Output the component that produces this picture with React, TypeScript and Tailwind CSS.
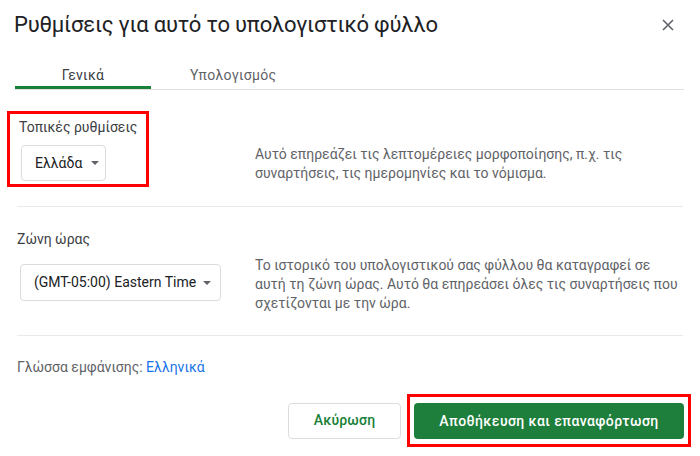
import React from "react";

function Caret() {
  return (
    <svg width="8" height="4" viewBox="0 0 8 4" className="shrink-0">
      <path d="M0 0 L8 0 L4 4 Z" fill="#5f6368" />
    </svg>
  );
}

export default function App() {
  return (
    <div
      className="w-[700px] h-[456px] bg-white overflow-hidden"
      style={{ fontFamily: "Roboto, 'Noto Sans', sans-serif" }}
    >
      {/* Header */}
      <div className="h-[50px] flex items-center justify-between pl-[14px] pr-[26px]">
        <div className="text-[22px] text-[#202124] leading-none tracking-[-0.2px]">
          Ρυθμίσεις για αυτό το υπολογιστικό φύλλο
        </div>
        <svg width="12" height="12" viewBox="0 0 12 12">
          <path d="M1 1 L11 11 M11 1 L1 11" stroke="#5f6368" strokeWidth="1.6" />
        </svg>
      </div>

      {/* Tabs */}
      <div className="mt-[10px] ml-[15px] mr-[16px] flex border-b border-[#e0e0e0]">
        <div className="w-[136px] h-[29px] flex items-center justify-center border-b-[3px] border-[#188038] -mb-[1px] pt-[4px] text-[14px] tracking-[0.3px] text-[#3c4043]">
          Γενικά
        </div>
        <div className="h-[29px] flex items-center pl-[39px] pt-[1px] text-[14px] tracking-[0.3px] text-[#5f6368]">
          Υπολογισμός
        </div>
      </div>

      {/* Content */}
      <div className="px-[17px]">
        {/* Section 1 */}
        <div className="mt-[21px] flex items-start">
          <div className="w-[238px] shrink-0">
            <div className="-ml-[10px] w-[142px] border-[3px] border-[#ff0000] pl-[9px] pt-[3px] pb-[3px]">
              <div className="text-[14px] leading-[20px] text-[#3c4043]">Τοπικές ρυθμίσεις</div>
              <div className="mt-[8px] ml-[2px] w-[85px] h-[36px] border border-[#dadce0] rounded-[4px] flex items-center pl-[13px] gap-[9px]">
                <span className="text-[14px] text-[#202124]">Ελλάδα</span>
                <Caret />
              </div>
            </div>
          </div>
          <div className="mt-[34px] text-[14px] leading-[19px] text-[#5f6368]">
            Αυτό επηρεάζει τις λεπτομέρειες μορφοποίησης, π.χ. τις
            <br />
            συναρτήσεις, τις ημερομηνίες και το νόμισμα.
          </div>
        </div>

        <div className="mt-[19px] h-px bg-[#e8eaed]" />

        {/* Section 2 */}
        <div className="mt-[22px] flex items-start">
          <div className="w-[238px] shrink-0">
            <div className="text-[14px] leading-[20px] text-[#3c4043]">Ζώνη ώρας</div>
            <div className="mt-[15px] ml-[3px] w-[201px] h-[37px] border border-[#dadce0] rounded-[4px] flex items-center pl-[13px] gap-[7px]">
              <span className="text-[14px] text-[#202124] whitespace-nowrap">(GMT-05:00) Eastern Time</span>
              <Caret />
            </div>
          </div>
          <div className="mt-[27px] text-[14px] leading-[19px] text-[#5f6368]">
            Το ιστορικό του υπολογιστικού σας φύλλου θα καταγραφεί σε
            <br />
            αυτή τη ζώνη ώρας. Αυτό θα επηρεάσει όλες τις συναρτήσεις που
            <br />
            σχετίζονται με την ώρα.
          </div>
        </div>

        <div className="mt-[22px] h-px bg-[#e8eaed]" />

        {/* Display language */}
        <div className="mt-[21px] text-[14px] leading-[20px] text-[#5f6368]">
          Γλώσσα εμφάνισης: <span className="text-[#1a73e8]">Ελληνικά</span>
        </div>
      </div>

      {/* Footer buttons */}
      <div className="mt-[17px] pr-[9px] flex justify-end items-center gap-[6px]">
        <button className="w-[113px] h-[36px] border border-[#dadce0] rounded-[4px] text-[14px] font-medium tracking-[0.2px] text-[#188038] bg-white">
          Ακύρωση
        </button>
        <div className="border-[3px] border-[#ff0000] px-[4px] pt-[6px] pb-[5px]">
          <button className="w-[270px] h-[36px] rounded-[4px] bg-[#1e7e3b] text-white text-[14px] font-medium tracking-[0.4px]">
            Αποθήκευση και επαναφόρτωση
          </button>
        </div>
      </div>
    </div>
  );
}
